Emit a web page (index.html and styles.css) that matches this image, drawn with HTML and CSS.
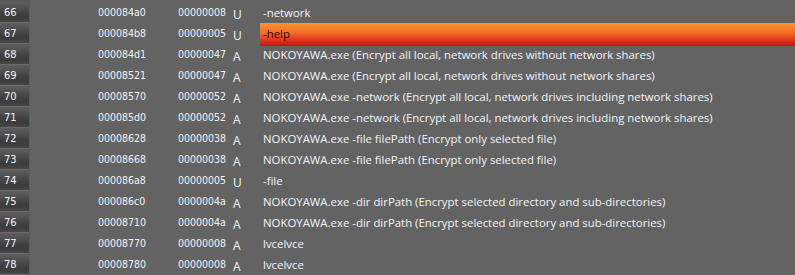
FILE: index.html
```html
<!DOCTYPE html>
<html lang="en">
<head>
<meta charset="UTF-8">
<title>Strings</title>
<link rel="stylesheet" href="styles.css">
</head>
<body>
<div class="strings">
    <div class="row"><span class="num">66</span><span></span><span class="off">000084a0</span><span class="len">00000008</span><span class="type">U</span><span class="str">-network</span></div>
    <div class="row selected"><span class="num">67</span><span></span><span class="off">000084b8</span><span class="len">00000005</span><span class="type">U</span><span class="str">-help</span></div>
    <div class="row"><span class="num">68</span><span></span><span class="off">000084d1</span><span class="len">00000047</span><span class="type">A</span><span class="str">NOKOYAWA.exe (Encrypt all local, network drives without network shares)</span></div>
    <div class="row"><span class="num">69</span><span></span><span class="off">00008521</span><span class="len">00000047</span><span class="type">A</span><span class="str">NOKOYAWA.exe (Encrypt all local, network drives without network shares)</span></div>
    <div class="row"><span class="num">70</span><span></span><span class="off">00008570</span><span class="len">00000052</span><span class="type">A</span><span class="str">NOKOYAWA.exe -network (Encrypt all local, network drives including network shares)</span></div>
    <div class="row"><span class="num">71</span><span></span><span class="off">000085d0</span><span class="len">00000052</span><span class="type">A</span><span class="str">NOKOYAWA.exe -network (Encrypt all local, network drives including network shares)</span></div>
    <div class="row"><span class="num">72</span><span></span><span class="off">00008628</span><span class="len">00000038</span><span class="type">A</span><span class="str">NOKOYAWA.exe -file filePath (Encrypt only selected file)</span></div>
    <div class="row"><span class="num">73</span><span></span><span class="off">00008668</span><span class="len">00000038</span><span class="type">A</span><span class="str">NOKOYAWA.exe -file filePath (Encrypt only selected file)</span></div>
    <div class="row"><span class="num">74</span><span></span><span class="off">000086a8</span><span class="len">00000005</span><span class="type">U</span><span class="str">-file</span></div>
    <div class="row"><span class="num">75</span><span></span><span class="off">000086c0</span><span class="len">0000004a</span><span class="type">A</span><span class="str">NOKOYAWA.exe -dir dirPath (Encrypt selected directory and sub-directories)</span></div>
    <div class="row"><span class="num">76</span><span></span><span class="off">00008710</span><span class="len">0000004a</span><span class="type">A</span><span class="str">NOKOYAWA.exe -dir dirPath (Encrypt selected directory and sub-directories)</span></div>
    <div class="row"><span class="num">77</span><span></span><span class="off">00008770</span><span class="len">00000008</span><span class="type">A</span><span class="str">lvcelvce</span></div>
    <div class="row"><span class="num">78</span><span></span><span class="off">00008780</span><span class="len">00000008</span><span class="type">A</span><span class="str">lvcelvce</span></div>
</div>
</body>
</html>
```

FILE: styles.css
```css
body {
    margin: 0;
    background-color: #636363;
    font-family: "DejaVu Sans Condensed", "DejaVu Sans", sans-serif;
    color: #f2f4f8;
    overflow: hidden;
}
.strings {
    padding-top: 2px;
    background: linear-gradient(to right, #585858 29px, #5c5c5c 29px, #5c5c5c 30px, #636363 30px);
    height: 275px;
    box-sizing: border-box;
}
.row {
    display: grid;
    grid-template-columns: 29px 69px 80px 55px 27px 1fr;
    height: 21px;
    line-height: 21px;
    font-size: 10.5px;
    white-space: nowrap;
}
.num {
    padding-left: 4px;
    font-size: 11px;
    background: linear-gradient(to bottom, #5e5e5e 0px, #555555 4px, #3f3f3f 12px, #3c3c3c 16px, #484848 20px, #6a6a6a 20px);
}
.type {
    font-family: "Open Sans", sans-serif;
    font-size: 12px;
    padding-top: 2px;
}
.str {
    padding-left: 3px;
    font-family: "Open Sans", sans-serif;
    font-size: 11.4px;
}
.selected .str {
    background: linear-gradient(to bottom, #fe952c, #f06a26 45%, #e0331e 75%, #cc1016);
    color: #3a0000;
}
```
